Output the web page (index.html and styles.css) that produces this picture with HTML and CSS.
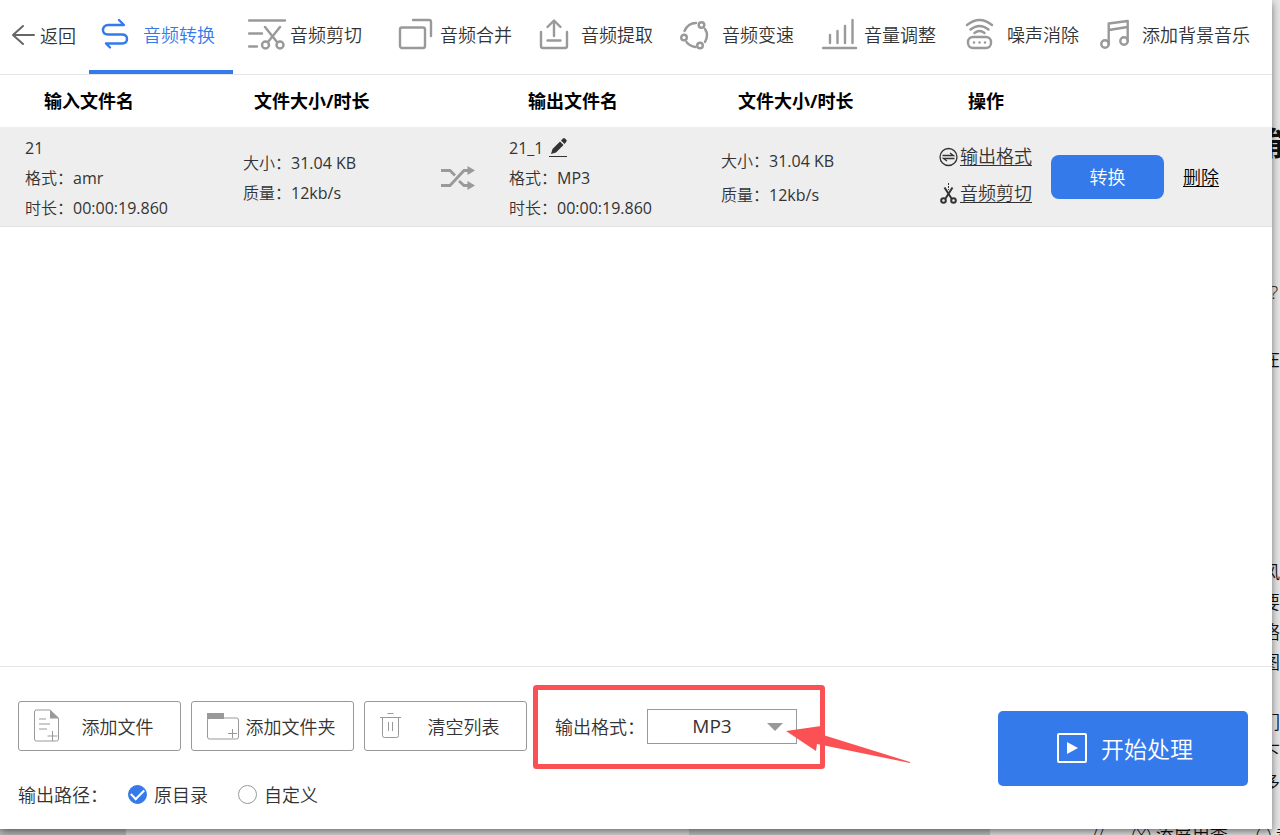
FILE: index.html
```
<!DOCTYPE html>
<html lang="zh-CN">

<head>
    <meta charset="UTF-8">
    <meta name="viewport" content="width=device-width, initial-scale=1.0">
    <title>音频转换</title>
    <link rel="stylesheet" href="styles.css">
</head>

<body>
    <div class="desktop">
        <!-- pages behind the window -->
        <div class="backdrop" aria-hidden="true">
            <div class="panel panel-left"></div>
            <div class="panel panel-middle"></div>
            <div class="panel panel-dark"></div>
            <div class="behind-title">能</div>
            <div class="behind-small">?</div>
            <div class="behind-tag">在</div>
            <div class="behind-text">风<br>要<br>络<br>图<br>；<br>们<br>下<br>多</div>
            <div class="behind-bottom"><span>//</span><span>(X) 添屏用李</span><span>(-) 都</span></div>
        </div>

        <div class="window">
            <header class="topbar">
                <button type="button" class="back">
                    <svg width="24" height="22" viewBox="0 0 24 22"><path d="M22 11H1M11 2L1 11l10 9" stroke="#666" stroke-width="2" fill="none" stroke-linecap="round" stroke-linejoin="round"/></svg>
                    返回
                </button>
                <nav class="tabs">
                    <a href="#" class="tab active">
                        <svg class="icon" viewBox="0 0 41 32"><path d="M18 2l5 5H7a5 5 0 0 0-5 5q0 4.500 5 4.500h14q5 0 5 4.500t-5 4.500H5l4 4"/></svg>
                        <span>音频转换</span>
                    </a>
                    <a href="#" class="tab">
                        <svg class="icon" viewBox="0 0 41 32"><path d="M1 2.500h36M1 15.500h13M1 28.500h8M17 9l12 15M32 9L20 24"/><circle cx="17.500" cy="27" r="3.500"/><circle cx="32" cy="27" r="3.500"/></svg>
                        <span>音频剪切</span>
                    </a>
                    <a href="#" class="tab">
                        <svg class="icon" viewBox="0 0 41 32"><rect x="2" y="9.500" width="25" height="20.500" rx="2"/><path d="M15 2h16q2 0 2 2v14"/></svg>
                        <span>音频合并</span>
                    </a>
                    <a href="#" class="tab">
                        <svg class="icon" viewBox="0 0 41 32"><path d="M2 14v14q0 2 2 2h22q2 0 2-2V14M15 18V3M8.500 9L15 2.500 21.500 9M8.500 22.500h13"/></svg>
                        <span>音频提取</span>
                    </a>
                    <a href="#" class="tab">
                        <svg class="icon" viewBox="0 0 41 32"><circle cx="21.500" cy="7" r="2.800"/><circle cx="4" cy="19.500" r="2.800"/><circle cx="20" cy="27.500" r="2.800"/><path d="M16 5Q8 5 4.500 13M25 11q4 6 0 13M6.500 24q3 4 9 5"/></svg>
                        <span>音频变速</span>
                    </a>
                    <a href="#" class="tab">
                        <svg class="icon" viewBox="0 0 41 32"><path d="M1 30h33M8 25v-8M15.500 25V13M23 25V8M30.500 25V2"/></svg>
                        <span>音量调整</span>
                    </a>
                    <a href="#" class="tab">
                        <svg class="icon" viewBox="0 0 41 32"><path d="M2 7q12.500-10 25 0M5.500 11.500q9-7 18 0M9.500 15q5-4 10 0"/><rect x="3" y="19" width="23" height="11" rx="5"/><path d="M9 24.500h.1M14.500 24.500h.1M20 24.500h.1"/></svg>
                        <span>噪声消除</span>
                    </a>
                    <a href="#" class="tab">
                        <svg class="icon" viewBox="0 0 41 32"><circle cx="5" cy="26" r="3.700"/><circle cx="24" cy="23" r="3.700"/><path d="M8.700 26V5.500L27.700 3v20M9 12l18.500-3"/></svg>
                        <span>添加背景音乐</span>
                    </a>
                </nav>
            </header>

            <main class="list">
                <table class="files">
                    <colgroup>
                        <col class="col-name"><col class="col-size"><col class="col-arrow"><col class="col-out"><col class="col-out-size"><col>
                    </colgroup>
                    <thead>
                        <tr>
                            <th class="head-name">输入文件名</th>
                            <th class="head-size">文件大小/时长</th>
                            <th></th>
                            <th class="head-name">输出文件名</th>
                            <th class="head-out-size">文件大小/时长</th>
                            <th class="head-action">操作</th>
                        </tr>
                    </thead>
                    <tbody>
                        <tr>
                            <td><span class="value">21</span><br>格式：<span class="value">amr</span><br>时长：<span class="value">00:00:19.860</span></td>
                            <td>大小：<span class="value">31.04 KB</span><br>质量：<span class="value">12kb/s</span></td>
                            <td>
                                <svg class="shuffle" viewBox="0 0 34 24"><path d="M0 4.500h9l5 5M0 19.500h9L23 4.500h5M18 15l5 4.500h5" fill="none" stroke="#999" stroke-width="2.800"/><path d="M26.500 0l7.500 4.500L26.500 9zM26.500 15l7.500 4.500-7.500 4.500z" fill="#999"/></svg>
                            </td>
                            <td>
                                <span class="out-name"><span class="value">21_1</span>
                                    <button type="button" class="edit" aria-label="重命名">
                                        <svg width="18" height="20" viewBox="0 0 18 20"><path d="M2 16l1.500-5L11 3.500l3.500 3.500L7 14.500zM12 2.500l2-2q1-.8 2 0l1.300 1.300q.8 1 0 2L15.500 6z" fill="#333"/><path d="M0 18.500h18" stroke="#333"/></svg>
                                    </button>
                                </span>
                                格式：<span class="value">MP3</span><br>时长：<span class="value">00:00:19.860</span>
                            </td>
                            <td class="loose">大小：<span class="value">31.04 KB</span><br>质量：<span class="value">12kb/s</span></td>
                            <td>
                                <div class="actions">
                                    <div class="links">
                                        <a href="#"><svg width="20" height="20" viewBox="0 0 20 20"><circle cx="9.500" cy="10" r="8.500" fill="none" stroke="#333" stroke-width="1.300"/><path d="M3.500 8.500h11L11 6M15.500 11.500h-11L8 14" fill="none" stroke="#333" stroke-width="1.300"/></svg><span>输出格式</span></a>
                                        <a href="#"><svg width="20" height="22" viewBox="0 0 20 22"><path d="M5.500 4.500l7 11M13.500 4.500l-7 11" stroke="#333" stroke-width="2"/><path d="M9.500 0v7" stroke="#333" stroke-dasharray="2 1"/><g fill="none" stroke="#333" stroke-width="2"><circle cx="4.500" cy="17.500" r="2.300"/><circle cx="14.500" cy="17.500" r="2.300"/></g></svg><span>音频剪切</span></a>
                                    </div>
                                    <button type="button" class="convert">转换</button>
                                    <a href="#" class="delete">删除</a>
                                </div>
                            </td>
                        </tr>
                    </tbody>
                </table>
            </main>

            <footer class="bottom">
                <div class="settings">
                    <div class="row">
                        <button type="button" class="tool">
                            <svg width="34" height="34" viewBox="0 0 34 34"><path d="M17 1H3.500Q1.500 1 1.500 3v27q0 2 2 2h20q2 0 2-2V9z" fill="none" stroke="#999"/><path d="M17 1l9 8.500h-9z" fill="#999"/><path d="M6 10h7M6 15h11M6 20h8M14.500 27h10M19.500 22v10" stroke="#999"/></svg>
                            <span>添加文件</span>
                        </button>
                        <button type="button" class="tool">
                            <svg width="34" height="34" viewBox="0 0 34 34"><rect x="1.500" y="9" width="31" height="21" rx="2" fill="none" stroke="#999"/><path d="M1 10V4h17v6z" fill="#999"/><path d="M22 24.500h9M26.500 20v9" stroke="#999"/></svg>
                            <span>添加文件夹</span>
                        </button>
                        <button type="button" class="tool">
                            <svg width="34" height="34" viewBox="0 0 34 34"><path d="M1 8.500h21M8.500 4.500h6M3.500 8.500v18q0 2 2 2h12q2 0 2-2v-18M9.500 13v9M13.500 13v9" fill="none" stroke="#999"/></svg>
                            <span>清空列表</span>
                        </button>
                        <div class="format">
                            <label for="format">输出格式：</label>
                            <div class="select">
                                <select id="format">
                                    <option>MP3</option>
                                </select>
                            </div>
                            <svg class="marker" width="380" height="90" viewBox="0 0 380 90"><rect x="3.500" y="3.500" width="287" height="79" rx="1" fill="none" stroke="#fc5154" stroke-width="5"/><path d="M254 47l35-5-1 8 90 28v1l-93-19-1 7z" fill="#fc5154"/></svg>
                        </div>
                    </div>
                    <div class="row path">
                        <span class="path-label">输出路径：</span>
                        <label><input type="radio" name="path" checked>原目录</label>
                        <label><input type="radio" name="path">自定义</label>
                    </div>
                </div>
                <button type="button" class="start">
                    <svg width="30" height="30" viewBox="0 0 30 30"><rect x="1" y="1" width="28" height="28" rx="1" fill="none" stroke="#fff" stroke-width="2"/><path d="M10 9l11 6-11 6z" fill="#fff"/></svg>
                    开始处理
                </button>
            </footer>
        </div>
    </div>
</body>

</html>
```
FILE: styles.css
```
* { box-sizing: border-box; }
body {
    margin: 0;
    font-family: "Open Sans", "Noto Sans CJK SC", sans-serif;
    font-size: 18px;
    font-weight: 350;
    color: #333;
}
button, select {
    font: inherit;
    color: inherit;
    padding: 0;
    cursor: pointer;
}
a {
    color: inherit;
    text-decoration: none;
}
svg {
    display: block;
    flex-shrink: 0;
}

.desktop {
    position: relative;
    height: 100vh;
    padding: 0 8px 6px 0;
    overflow: hidden;
    background-color: #e6e6e6;
}
.window {
    position: relative;
    display: flex;
    flex-direction: column;
    height: 100%;
    background-color: #fff;
    box-shadow: 0 3px 8px rgba(0, 0, 0, 0.5);
}

/* what shows around the window */
.backdrop {
    position: absolute;
    inset: 0;
    color: #111;
}
.panel {
    position: absolute;
    bottom: 0;
    height: 20px;
}
.panel-left { left: 0; width: 126px; background-color: #bbb; }
.panel-middle { left: 126px; width: 563px; background-color: #ddd; }
.panel-dark { left: 689px; width: 301px; background-color: #c0c3c5; }
.behind-title, .behind-small, .behind-tag, .behind-text {
    position: absolute;
    right: 0;
    line-height: 30px;
}
.behind-title {
    top: 128px;
    right: -18px;
    font-size: 32px;
    font-weight: bold;
}
.behind-small { top: 277px; right: 2px; }
.behind-tag { top: 344px; }
.behind-text { top: 557px; }
.behind-bottom {
    position: absolute;
    right: -14px;
    bottom: -12px;
    display: flex;
    gap: 28px;
    line-height: 24px;
    white-space: nowrap;
}

/* top bar */
.topbar {
    display: flex;
    height: 75px;
    border-bottom: 1px solid #e6e6e6;
}
.back {
    display: flex;
    align-items: center;
    gap: 4px;
    width: 89px;
    padding: 0 0 5px 12px;
    border: none;
    background: none;
    white-space: nowrap;
}
.tabs {
    flex: 1;
    display: grid;
    grid-template-columns: 144fr 147fr 138fr 138fr 139fr 140fr 132fr 184fr;
    column-gap: 3px;
}
.tab {
    display: flex;
    align-items: center;
    gap: 1px;
    min-width: 0;
    padding: 0 0 2px 12px;
    border-bottom: 4px solid transparent;
    white-space: nowrap;
}
.tab.active {
    color: #347aeb;
    border-color: #347aeb;
}
.icon {
    width: 41px;
    height: 32px;
    fill: none;
    stroke: #999;
    stroke-width: 2.4px;
    stroke-linecap: round;
    stroke-linejoin: round;
}
.active .icon { stroke: #347aeb; }

/* file list */
.list {
    flex: 1;
    overflow: hidden;
}
.files {
    width: 100%;
    border-collapse: collapse;
    table-layout: fixed;
}
.col-name, .col-out-size { width: 218px; }
.col-size { width: 198px; }
.col-arrow { width: 68px; }
.col-out { width: 212px; }
.files th {
    height: 52px;
    padding: 0 0 2px;
    text-align: left;
    font-weight: bold;
    color: #000;
    white-space: nowrap;
}
.files .head-name { padding-left: 44px; }
.files .head-size { padding-left: 36px; }
.files .head-out-size { padding-left: 42px; }
.files .head-action { padding-left: 54px; }
.files tbody tr {
    height: 99px;
    background-color: #eee;
    border-bottom: 1px solid #e2e2e2;
}
.files td {
    padding: 4px 0 0 25px;
    font-size: 16px;
    line-height: 30px;
    white-space: nowrap;
}
.files .loose { line-height: 34px; }
.value { font-weight: 400; }
.shuffle {
    width: 34px;
    height: 24px;
}
.out-name {
    display: flex;
    align-items: center;
    gap: 6px;
}
.edit {
    border: none;
    background: none;
}
.actions {
    display: flex;
    align-items: center;
    gap: 19px;
    padding-bottom: 2px;
    font-size: 18px;
}
.links { padding-bottom: 4px; }
.links a {
    display: flex;
    align-items: center;
    gap: 1px;
    line-height: 37px;
}
.links span, .delete {
    text-decoration: underline;
    text-decoration-thickness: 1px;
    text-underline-offset: 2px;
}
.convert {
    width: 113px;
    height: 44px;
    border: none;
    border-radius: 8px;
    background-color: #347aeb;
    color: #fff;
}
.delete { color: #000; }

/* bottom bar */
.bottom {
    display: flex;
    justify-content: space-between;
    align-items: flex-start;
    padding: 34px 24px 20px 18px;
    border-top: 1px solid #e6e6e6;
}
.row {
    display: flex;
    align-items: center;
    gap: 10px;
}
.tool {
    display: flex;
    align-items: center;
    width: 163px;
    height: 50px;
    padding: 0 12px 0 14px;
    border: 1px solid #999;
    border-radius: 3px;
    background-color: #fff;
    white-space: nowrap;
}
.tool span {
    flex: 1;
    text-align: center;
}
.format {
    position: relative;
    display: flex;
    align-items: center;
    height: 50px;
    margin-left: 18px;
    gap: 2px;
    white-space: nowrap;
}
.select { position: relative; }
.select::after {
    content: "";
    position: absolute;
    top: 14px;
    right: 14px;
    border: 8px solid transparent;
    border-top-color: #999;
    border-bottom: none;
    pointer-events: none;
}
.select select {
    display: block;
    width: 150px;
    height: 35px;
    padding-right: 20px;
    border: 1px solid #999;
    border-radius: 0;
    background-color: #fff;
    appearance: none;
    font-size: 19px;
    font-weight: 400;
    text-align-last: center;
}
.marker {
    position: absolute;
    left: -23px;
    top: -17px;
    pointer-events: none;
}
.path {
    height: 30px;
    margin-top: 28px;
    gap: 30px;
}
.path-label { margin-right: -10px; }
.path label {
    display: flex;
    align-items: center;
    gap: 7px;
}
.path input {
    width: 19px;
    height: 19px;
    margin: 0;
    border: 1px solid #999;
    border-radius: 50%;
    background-color: #fff;
    appearance: none;
}
.path input:checked {
    display: grid;
    place-items: center;
    border-color: #347aeb;
    background-color: #347aeb;
}
.path input:checked::before {
    content: "";
    width: 11px;
    height: 6px;
    margin-bottom: 3px;
    border-left: 2px solid #fff;
    border-bottom: 2px solid #fff;
    transform: rotate(-45deg);
}
.start {
    display: flex;
    align-items: center;
    justify-content: center;
    gap: 14px;
    width: 250px;
    height: 75px;
    margin-top: 10px;
    padding: 0 0 2px 4px;
    border: none;
    border-radius: 5px;
    background-color: #347aeb;
    color: #fff;
    font-size: 23px;
}
```
